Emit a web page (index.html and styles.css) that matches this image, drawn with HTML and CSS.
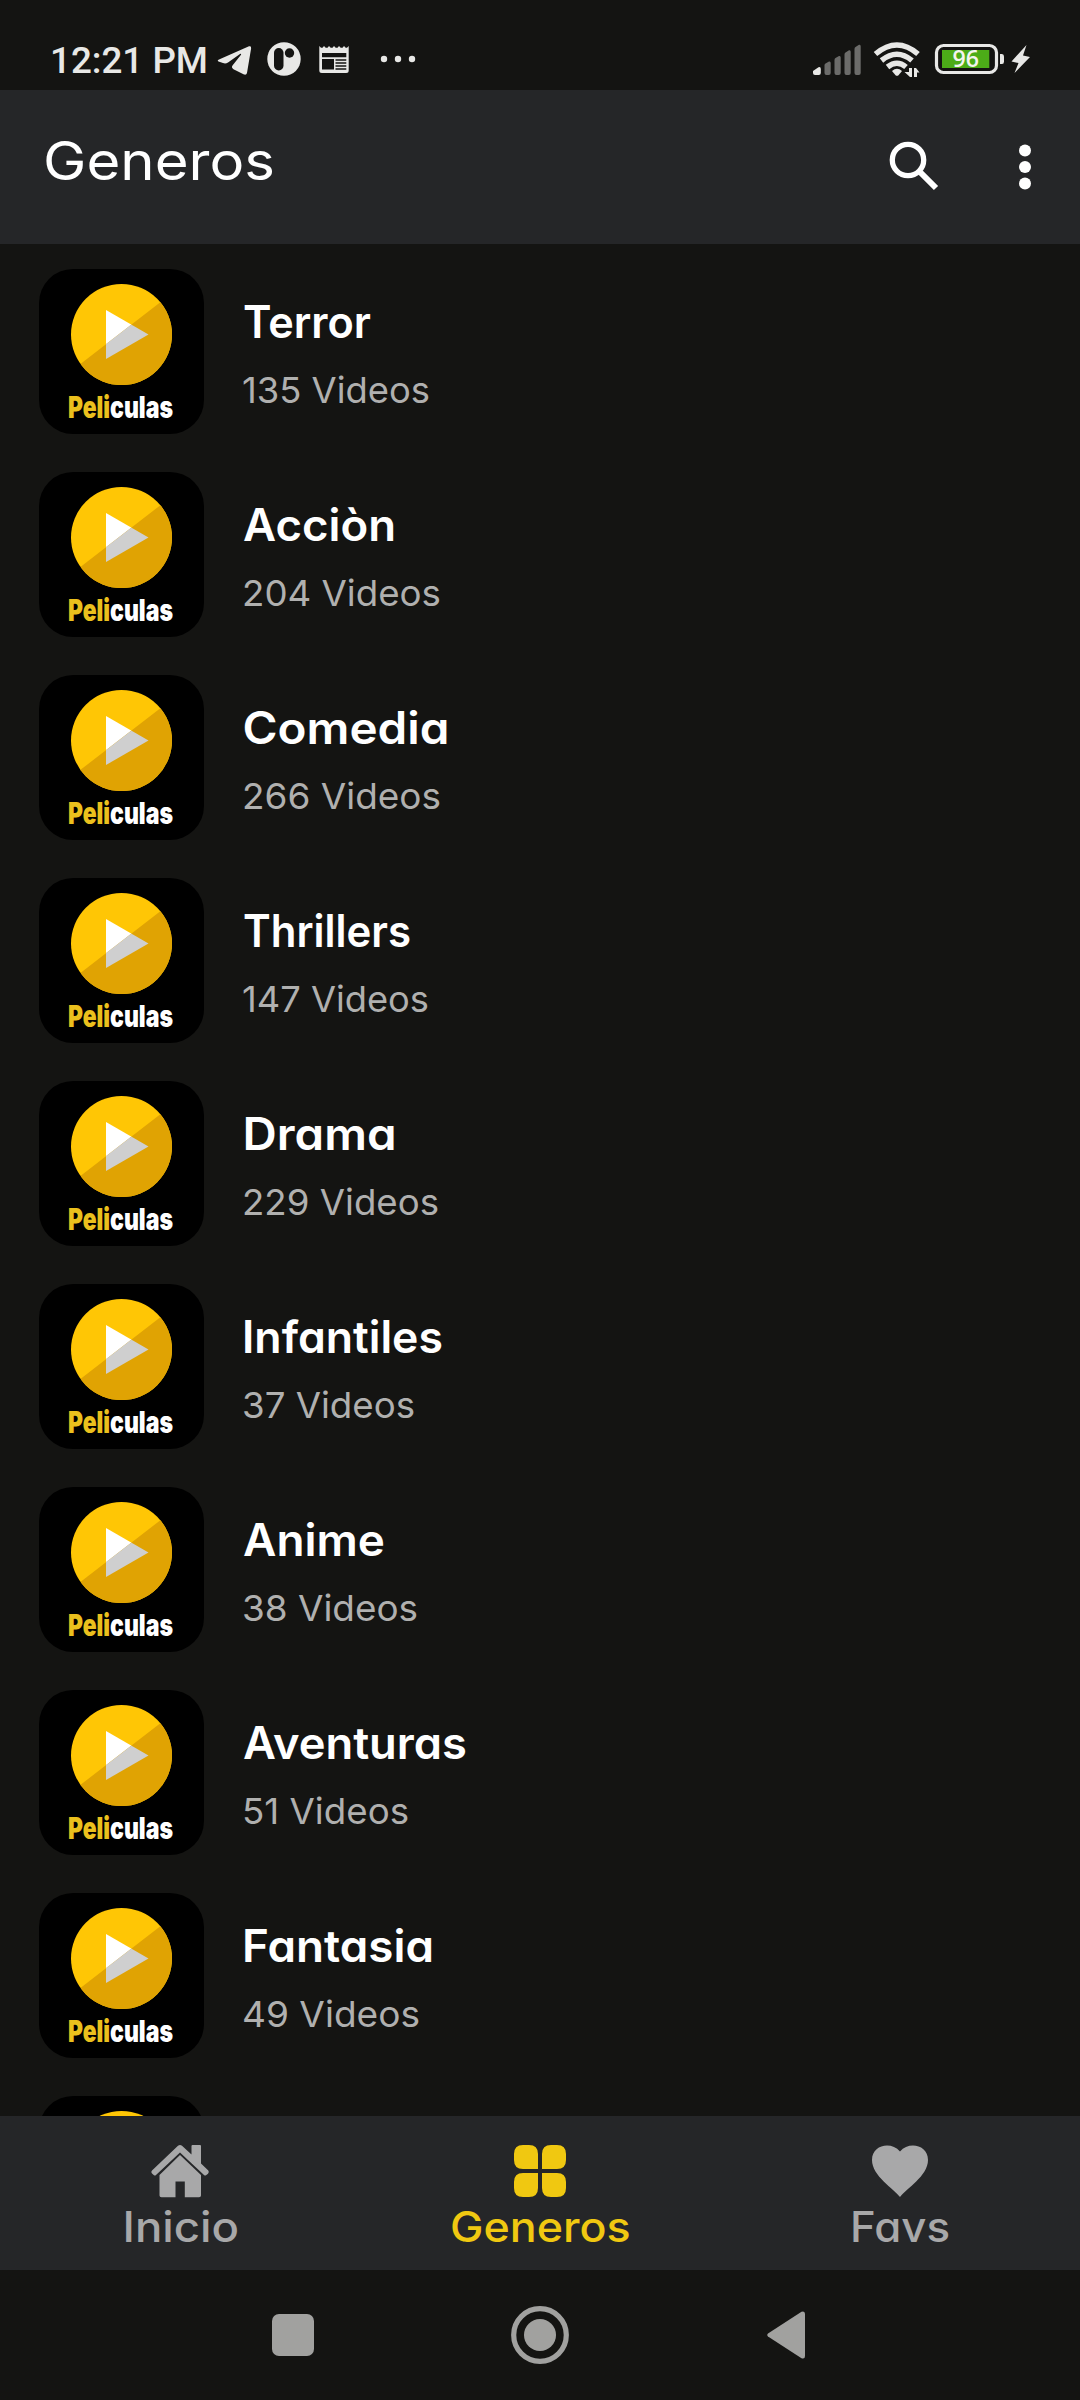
FILE: index.html
```html
<!DOCTYPE html>
<html lang="es">
<head>
<meta charset="utf-8">
<title>Generos</title>
<link rel="stylesheet" href="styles.css">
</head>
<body>
<svg class="defs" width="0" height="0" aria-hidden="true">
  <symbol id="logo" viewBox="0 0 165 165">
    <clipPath id="disc"><circle cx="82.5" cy="65.5" r="50.5"/></clipPath>
    <clipPath id="shade"><path d="M165 -.4V165H-49.5Z"/></clipPath>
    <rect width="165" height="165" rx="34" fill="#000"/>
    <circle cx="82.5" cy="65.5" r="50.5" fill="#ffc605"/>
    <path d="M67 41L109.500 65.500L67 90Z" fill="#fff"/>
    <g clip-path="url(#disc)"><path d="M165 -.4V165H-49.5Z" fill="#e0a303"/></g>
    <path d="M67 41L109.500 65.500L67 90Z" fill="#cfcfcf" clip-path="url(#shade)"/>
  </symbol>
</svg>
<div class="screen">
  <header class="status">
    <svg class="clock-text" width="160" height="90"><text x="0" y="73" textLength="158" lengthAdjust="spacingAndGlyphs">12:21 PM</text></svg>
    <svg class="notices" width="208" height="90" viewBox="214 0 208 90">
      <path d="M219 59.500L249 46.300Q251.500 45.500 251.100 48.500L247 73Q246.200 75.500 243.500 74.200L233.500 69.200Q231 67.500 232.500 65.500L241 54.700Q241.500 53 240 54L228 62.500Q225.500 64 223 63L218.500 61.500Q216.800 60.700 219 59.500Z"/>
      <ellipse cx="284" cy="59" rx="16.700" ry="16.800"/>
      <rect class="cut" x="274" y="48" width="9.500" height="22.500" rx="4.700"/>
      <circle class="cut" cx="289.500" cy="53" r="4.700"/>
      <path fill-rule="evenodd" d="M319.300 46L321 47.800H322.500L324 46L325.700 47.800H327.500L329 46L330.700 47.800H332.500L334 46L335.700 47.800H337.500L339 46L340.700 47.800H342.500L344 46L345.700 47.800H347L348.700 46V70.500Q348.700 73 346.200 73H321.800Q319.300 73 319.300 70.500ZM322 53V57.300H346.300V53ZM322 59V69.500H334V59ZM335.500 59.300V60.700H346.300V59.300ZM335.500 62.300V63.700H346.300V62.300ZM335.500 65.300V66.700H346.300V65.300ZM335.500 68.300V69.700H346.300V68.300Z"/>
      <circle cx="384" cy="59" r="3.200"/><circle cx="398" cy="59" r="3.200"/><circle cx="412" cy="59" r="3.200"/>
    </svg>
    <svg class="system" width="226" height="90" viewBox="810 0 226 90">
      <path d="M813 73V71L818.500 67.200Q820.800 66.500 820.800 69V73Q820.800 75 818.800 75H815Q813 75 813 73Z"/>
      <g class="dim">
        <path d="M824.500 65Q824.500 64 825.500 63.500L829 61.500Q830.700 61 830.700 63V73Q830.700 75 828.700 75H826.500Q824.500 75 824.500 73Z"/>
        <path d="M834.500 60Q834.500 58.500 835.500 58L839 56Q840.700 55.500 840.700 57.500V73Q840.700 75 838.700 75H836.500Q834.500 75 834.500 73Z"/>
        <path d="M844.500 54.500Q844.500 53 845.500 52.500L849 50.300Q850.700 49.800 850.700 51.800V73Q850.700 75 848.700 75H846.500Q844.500 75 844.500 73Z"/>
        <path d="M854.500 49Q854.500 47.500 855.500 47L859 44.800Q860.700 44.300 860.700 46.300V73Q860.700 75 858.700 75H856.500Q854.500 75 854.500 73Z"/>
      </g>
      <g class="wifi"><path d="M875.500 54Q897 36 918 54"/><path d="M881.500 60.500Q897 48 912 60.500"/><path d="M887.500 67Q897 59.500 906 67"/></g>
      <path d="M892 71Q897 66.500 902 71L898.500 75.200Q897 76.500 895.500 75.200Z"/>
      <path d="M909 68H912V77H910L904.500 72H909ZM914 68H916L919.500 72.500H917V77H914Z"/>
      <rect class="shell" x="936.500" y="45.500" width="60" height="27" rx="7"/>
      <rect x="942" y="50" width="47.300" height="18" fill="#4cac18"/>
      <path d="M1000 54H1002Q1004 54 1004 56.500V61.500Q1004 64 1002 64H1000Z"/>
      <path d="M1026.500 45L1011.500 61.500L1018.500 63L1014.500 73L1030 57L1023 55.500Z"/>
      <text class="charge" x="952.500" y="67.300" textLength="26.500" lengthAdjust="spacingAndGlyphs">96</text>
    </svg>
  </header>
  <div class="appbar">
    <svg class="title" width="240" height="154"><text x="1" y="90.300" textLength="232" lengthAdjust="spacingAndGlyphs">Generos</text></svg>
    <svg class="actions" width="160" height="154" viewBox="880 90 160 154">
      <circle class="lens" cx="908" cy="160" r="15.700"/><path class="handle" d="M920.500 172.500L936 188"/>
      <circle cx="1025" cy="150.500" r="6"/><circle cx="1025" cy="167" r="6"/><circle cx="1025" cy="183.500" r="6"/>
    </svg>
  </div>
  <main class="list">
    <article class="row"><svg class="thumb"><use href="#logo"/><text class="brand accent" x="29" y="148.500" textLength="42" lengthAdjust="spacingAndGlyphs">Peli</text><text class="brand" x="71" y="148.500" textLength="63" lengthAdjust="spacingAndGlyphs">culas</text></svg><svg class="info"><text class="name" x="3" y="69" textLength="128" lengthAdjust="spacingAndGlyphs">Terror</text><text class="count" x="2" y="134" textLength="188" lengthAdjust="spacingAndGlyphs">135 Videos</text></svg></article>
    <article class="row"><svg class="thumb"><use href="#logo"/><text class="brand accent" x="29" y="148.500" textLength="42" lengthAdjust="spacingAndGlyphs">Peli</text><text class="brand" x="71" y="148.500" textLength="63" lengthAdjust="spacingAndGlyphs">culas</text></svg><svg class="info"><text class="name" x="3" y="69" textLength="153" lengthAdjust="spacingAndGlyphs">Acciòn</text><text class="count" x="2" y="134" textLength="199" lengthAdjust="spacingAndGlyphs">204 Videos</text></svg></article>
    <article class="row"><svg class="thumb"><use href="#logo"/><text class="brand accent" x="29" y="148.500" textLength="42" lengthAdjust="spacingAndGlyphs">Peli</text><text class="brand" x="71" y="148.500" textLength="63" lengthAdjust="spacingAndGlyphs">culas</text></svg><svg class="info"><text class="name" x="2.500" y="69" textLength="207" lengthAdjust="spacingAndGlyphs">Comedia</text><text class="count" x="2" y="134" textLength="199" lengthAdjust="spacingAndGlyphs">266 Videos</text></svg></article>
    <article class="row"><svg class="thumb"><use href="#logo"/><text class="brand accent" x="29" y="148.500" textLength="42" lengthAdjust="spacingAndGlyphs">Peli</text><text class="brand" x="71" y="148.500" textLength="63" lengthAdjust="spacingAndGlyphs">culas</text></svg><svg class="info"><text class="name" x="3" y="69" textLength="168" lengthAdjust="spacingAndGlyphs">Thrillers</text><text class="count" x="2" y="134" textLength="187" lengthAdjust="spacingAndGlyphs">147 Videos</text></svg></article>
    <article class="row"><svg class="thumb"><use href="#logo"/><text class="brand accent" x="29" y="148.500" textLength="42" lengthAdjust="spacingAndGlyphs">Peli</text><text class="brand" x="71" y="148.500" textLength="63" lengthAdjust="spacingAndGlyphs">culas</text></svg><svg class="info"><text class="name" x="2.500" y="69" textLength="154" lengthAdjust="spacingAndGlyphs">Drama</text><text class="count" x="2" y="134" textLength="197" lengthAdjust="spacingAndGlyphs">229 Videos</text></svg></article>
    <article class="row"><svg class="thumb"><use href="#logo"/><text class="brand accent" x="29" y="148.500" textLength="42" lengthAdjust="spacingAndGlyphs">Peli</text><text class="brand" x="71" y="148.500" textLength="63" lengthAdjust="spacingAndGlyphs">culas</text></svg><svg class="info"><text class="name" x="2" y="69" textLength="201" lengthAdjust="spacingAndGlyphs">Infantiles</text><text class="count" x="2" y="134" textLength="173" lengthAdjust="spacingAndGlyphs">37 Videos</text></svg></article>
    <article class="row"><svg class="thumb"><use href="#logo"/><text class="brand accent" x="29" y="148.500" textLength="42" lengthAdjust="spacingAndGlyphs">Peli</text><text class="brand" x="71" y="148.500" textLength="63" lengthAdjust="spacingAndGlyphs">culas</text></svg><svg class="info"><text class="name" x="3" y="69" textLength="142" lengthAdjust="spacingAndGlyphs">Anime</text><text class="count" x="2" y="134" textLength="176" lengthAdjust="spacingAndGlyphs">38 Videos</text></svg></article>
    <article class="row"><svg class="thumb"><use href="#logo"/><text class="brand accent" x="29" y="148.500" textLength="42" lengthAdjust="spacingAndGlyphs">Peli</text><text class="brand" x="71" y="148.500" textLength="63" lengthAdjust="spacingAndGlyphs">culas</text></svg><svg class="info"><text class="name" x="3" y="69" textLength="224" lengthAdjust="spacingAndGlyphs">Aventuras</text><text class="count" x="2" y="134" textLength="167" lengthAdjust="spacingAndGlyphs">51 Videos</text></svg></article>
    <article class="row"><svg class="thumb"><use href="#logo"/><text class="brand accent" x="29" y="148.500" textLength="42" lengthAdjust="spacingAndGlyphs">Peli</text><text class="brand" x="71" y="148.500" textLength="63" lengthAdjust="spacingAndGlyphs">culas</text></svg><svg class="info"><text class="name" x="2" y="69" textLength="192" lengthAdjust="spacingAndGlyphs">Fantasia</text><text class="count" x="2" y="134" textLength="178" lengthAdjust="spacingAndGlyphs">49 Videos</text></svg></article>
    <article class="row"><svg class="thumb"><use href="#logo"/></svg></article>
  </main>
  <nav class="tabs">
    <svg class="tab" viewBox="0 2116 360 154">
      <path d="M152 2170.500L178 2145.800Q180 2144.200 182 2145.800L191.500 2154.500V2146Q191.500 2145 192.500 2145H200Q201 2145 201 2146V2163.500L208.300 2170.500Q209.500 2172 208 2173.700L206 2175.300Q205 2176 204 2175L180 2152.500L156 2175Q155 2176 154 2175.200L152 2173.500Q150.500 2172 152 2170.500Z"/>
      <path d="M180 2155L201 2175V2195.500Q201 2197.300 199 2197.300H184.800V2181.500H175.500V2197.300H161.500Q159.500 2197.300 159.500 2195.500V2175Z"/>
      <text x="122.500" y="2242" textLength="116.500" lengthAdjust="spacingAndGlyphs">Inicio</text>
    </svg>
    <svg class="tab active" viewBox="360 2116 360 154">
      <path d="M523 2145H529Q538 2145 538 2154V2169H523Q514 2169 514 2160V2154Q514 2145 523 2145ZM551 2145H557Q566 2145 566 2154V2160Q566 2169 557 2169H542V2154Q542 2145 551 2145ZM523 2173H538V2188Q538 2197 529 2197H523Q514 2197 514 2188V2182Q514 2173 523 2173ZM542 2173H557Q566 2173 566 2182V2188Q566 2197 557 2197H551Q542 2197 542 2188Z"/>
      <text x="450" y="2242" textLength="180.500" lengthAdjust="spacingAndGlyphs">Generos</text>
    </svg>
    <svg class="tab" viewBox="720 2116 360 154">
      <path d="M900 2197C894 2189 872 2176 872 2160C872 2145 891 2141 900 2151.500C909 2141 928 2145 928 2160C928 2176 906 2189 900 2197Z"/>
      <text x="850" y="2242" textLength="100" lengthAdjust="spacingAndGlyphs">Favs</text>
    </svg>
  </nav>
  <footer class="softkeys">
    <svg width="42" height="42"><rect width="42" height="42" rx="7"/></svg>
    <svg width="58" height="58"><circle class="ring" cx="29" cy="29" r="26.300"/><circle cx="29" cy="29" r="16"/></svg>
    <svg width="42" height="48"><path d="M2 22.500Q.5 24 2 25.500L35.500 47.300Q39 48.500 39 45V3Q39-.5 35.500.7Z"/></svg>
  </footer>
</div>
</body>
</html>
```
FILE: styles.css
```css
* { box-sizing: border-box; }
body { margin: 0; background: #141412; font-family: Inter, "Open Sans", sans-serif; font-feature-settings: "cv11"; }
svg { display: block; flex: none; }
.defs { position: absolute; }
.screen { width: 1080px; height: 2400px; display: flex; flex-direction: column; overflow: hidden; background: #141412; }
.status { height: 90px; flex: none; display: flex; justify-content: space-between; padding: 0 44px 0 50px; fill: #e8e8e6; }
.clock-text { font: 500 37px Roboto, sans-serif; }
.notices { margin: 0 auto 0 4px; }
.cut { fill: #141412; }
.dim { fill: #6c6c6a; }
.wifi { fill: none; stroke: #e8e8e6; stroke-width: 5.5; }
.shell { fill: none; stroke: #e8e8e6; stroke-width: 3.2; }
.charge { font: 600 22.5px "Open Sans", sans-serif; fill: #f4f4f0; }
.appbar { height: 154px; flex: none; display: flex; justify-content: space-between; padding: 0 40px 0 42px; background: #252628; fill: #fff; }
.title { font-size: 53px; font-weight: 400; }
.lens { fill: none; stroke: #fff; stroke-width: 5.3; }
.handle { stroke: #fff; stroke-width: 6; }
.list { flex: 1; min-height: 0; overflow: hidden; display: flex; flex-direction: column; gap: 38px; padding: 25px 39px 0; }
.row { display: flex; flex: none; gap: 36px; height: 165px; }
.thumb { width: 165px; height: 165px; }
.info { width: 420px; height: 165px; }
.name { font-size: 44.5px; font-weight: 600; fill: #fff; }
.count { font-size: 36px; font-weight: 400; fill: #b0b0af; }
.brand { font-family: Inter, sans-serif; font-feature-settings: normal; font-size: 30px; font-weight: 900; fill: #fff; }
.accent { fill: #ebc01d; }
.tabs { height: 154px; flex: none; display: flex; background: #252628; }
.tab { width: 360px; height: 154px; fill: #a8a8a9; font-size: 42px; font-weight: 500; }
.active { fill: #f0c811; }
.softkeys { height: 130px; flex: none; display: flex; justify-content: space-between; align-items: center; padding: 0 272px; fill: #a1a19f; }
.ring { fill: none; stroke: #a1a19f; stroke-width: 5.2; }
```
